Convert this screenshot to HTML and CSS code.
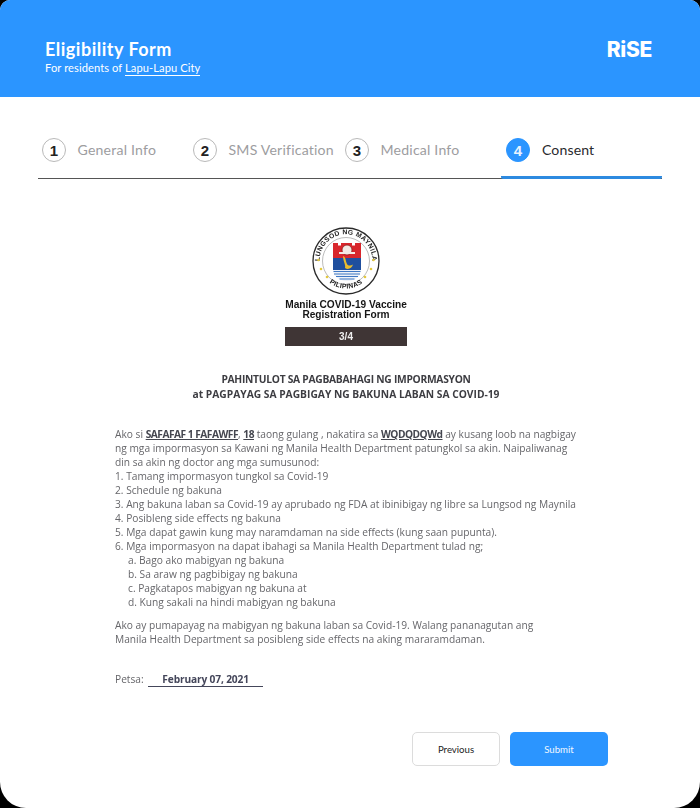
FILE: index.html
```html
<!DOCTYPE html>
<html lang="tl">
<head>
<meta charset="utf-8">
<title>Eligibility Form</title>
<link rel="stylesheet" href="styles.css">
</head>
<body>
<main class="card">
  <header class="hero">
    <div class="hero-text">
      <h1 class="hero-title">Eligibility Form</h1>
      <p class="hero-sub">For residents of <span class="hero-city">Lapu-Lapu City</span></p>
    </div>
    <div class="logo">RiSE</div>
  </header>

  <nav class="tabs">
    <div class="tab"><span class="num">1</span><span class="tab-label">General Info</span></div>
    <div class="tab"><span class="num">2</span><span class="tab-label">SMS Verification</span></div>
    <div class="tab"><span class="num">3</span><span class="tab-label">Medical Info</span></div>
    <div class="tab tab-active"><span class="num">4</span><span class="tab-label">Consent</span></div>
  </nav>

  <section class="doc">
    <div class="doc-head">
      <svg class="seal" width="68" height="68" viewBox="0 0 68 68" aria-hidden="true">
        <circle cx="34" cy="34" r="33" fill="#fff" stroke="#2a2a2a" stroke-width="1.300"/>
        <circle cx="34" cy="34" r="23.500" fill="#fff" stroke="#777" stroke-width=".5"/>
        <defs>
          <path id="arcTop" d="M8.500 40 A26.300 26.300 0 1 1 59.500 40"/>
          <path id="arcBot" d="M11 49 A27.500 27.500 0 0 0 57 49"/>
        </defs>
        <text class="seal-text"><textPath href="#arcTop" startOffset="50%" text-anchor="middle">LUNGSOD NG MAYNILA</textPath></text>
        <text class="seal-text"><textPath href="#arcBot" startOffset="50%" text-anchor="middle">PILIPINAS</textPath></text>
        <path d="M21 16h5v2.500h3V16h11v2.500h3V16h6v15H21z" fill="#d8262c"/>
        <circle cx="35" cy="23" r="5" fill="#f3e9e4" stroke="#8a1a1a" stroke-width=".8"/>
        <rect x="27" y="25" width="16" height="2" fill="#f3e9e4"/>
        <rect x="21" y="31" width="28" height="12" fill="#1f4f9e"/>
        <path d="M31 29c3 1 2.500 5 4 8 1 2 4 2 6 .5-1 4-5 5.500-8 3.500 1-3-2-7-2-12z" fill="#e9bd2f"/>
        <path d="M21 43h28c0 5-5 11-14 11S21 48 21 43z" fill="#eef2f8"/>
        <path d="M21.500 44.500h27M22 47h26M24 49.500h22M27.500 52h15" stroke="#3f78c4" stroke-width="1" fill="none"/>
        <g fill="#e4c93f">
          <circle cx="6.500" cy="33" r="1.300"/><circle cx="61.500" cy="33" r="1.300"/>
          <circle cx="9" cy="42" r="1.300"/><circle cx="59" cy="42" r="1.300"/>
          <circle cx="15" cy="50" r="1.300"/><circle cx="53" cy="50" r="1.300"/>
        </g>
      </svg>
      <p class="doc-name">Manila COVID-19 Vaccine<br>Registration Form</p>
      <div class="doc-step">3/4</div>
    </div>

    <h2 class="doc-title"><span class="doc-title-top">PAHINTULOT SA PAGBABAHAGI NG IMPORMASYON</span><br>at PAGPAYAG SA PAGBIGAY NG BAKUNA LABAN SA COVID-19</h2>

    <div class="doc-body">
      <p class="line">Ako si <b class="fill">SAFAFAF 1 FAFAWFF</b>, <b class="fill">18</b> taong gulang , nakatira sa <b class="fill">WQDQDQWd</b> ay kusang loob na nagbigay</p>
      <p class="line">ng mga impormasyon sa Kawani ng Manila Health Department patungkol sa akin. Naipaliwanag</p>
      <p class="line">din sa akin ng doctor ang mga sumusunod:</p>
      <p class="line">1. Tamang impormasyon tungkol sa Covid-19</p>
      <p class="line">2. Schedule ng bakuna</p>
      <p class="line">3. Ang bakuna laban sa Covid-19 ay aprubado ng FDA at ibinibigay ng libre sa Lungsod ng Maynila</p>
      <p class="line">4. Posibleng side effects ng bakuna</p>
      <p class="line">5. Mga dapat gawin kung may naramdaman na side effects (kung saan pupunta).</p>
      <p class="line">6. Mga impormasyon na dapat ibahagi sa Manila Health Department tulad ng;</p>
      <p class="line sub">a. Bago ako mabigyan ng bakuna</p>
      <p class="line sub">b. Sa araw ng pagbibigay ng bakuna</p>
      <p class="line sub">c. Pagkatapos mabigyan ng bakuna at</p>
      <p class="line sub">d. Kung sakali na hindi mabigyan ng bakuna</p>
      <p class="line gap">Ako ay pumapayag na mabigyan ng bakuna laban sa Covid-19. Walang pananagutan ang</p>
      <p class="line">Manila Health Department sa posibleng side effects na aking mararamdaman.</p>
      <p class="line date">Petsa: <b class="date-val">February 07, 2021</b></p>
    </div>
  </section>

  <footer class="actions">
    <button class="btn btn-ghost" type="button">Previous</button>
    <button class="btn btn-primary" type="button">Submit</button>
  </footer>
</main>
</body>
</html>
```
FILE: styles.css
```css
* { box-sizing: border-box; }
html, body { margin: 0; height: 100%; background: #000; }
p, h1, h2 { margin: 0; font-weight: inherit; font-size: inherit; }

.card {
  width: 700px;
  height: 808px;
  background: #fff;
  border-radius: 10px 10px 26px 26px;
  overflow: hidden;
  font-family: Lato, "Open Sans", sans-serif;
  display: flex;
  flex-direction: column;
}

.hero {
  height: 97px;
  flex: none;
  background: #2b95ff;
  color: #fff;
  display: flex;
  justify-content: space-between;
  align-items: flex-start;
  padding: 39px 48px 0 45px;
}
.hero-title { font-size: 18px; line-height: 21px; font-weight: 700; letter-spacing: .5px; }
.hero-sub { font-size: 11.100px; line-height: 15px; letter-spacing: .1px; }
.hero-city { border-bottom: 1px solid #fff; padding-bottom: 1px; }
.logo { font-family: Inter, sans-serif; font-weight: 800; font-size: 21px; line-height: 21px; letter-spacing: -.3px; }

.tabs {
  margin: 41px 38px 0;
  height: 41px;
  flex: none;
  display: grid;
  grid-template-columns: 151px 152px 160px 161px;
  border-bottom: 1px solid #555;
}
.tab {
  display: flex;
  align-items: flex-start;
  gap: 11.500px;
  padding-left: 4px;
  white-space: nowrap;
}
.num {
  width: 24px;
  height: 24px;
  flex: none;
  border: 1px solid #b9b9b9;
  border-radius: 50%;
  display: flex;
  align-items: center;
  justify-content: center;
  font-family: "Liberation Sans Narrow", "Liberation Sans", sans-serif;
  font-weight: 700;
  font-size: 15px;
  color: #222;
}
.tab-label { font-size: 14.100px; line-height: 24px; color: #9d9d9f; letter-spacing: .2px; }
.tab-active {
  padding-left: 5px;
  gap: 12px;
  height: 41px;
  margin-bottom: -1px;
  border-bottom: 3px solid #2d8ae0;
  border-radius: 0 0 2px 2px;
}
.tab-active .num { background: #2b95ff; border-color: #2b95ff; color: #e8f3ff; }
.tab-active .tab-label { color: #2a2a2e; letter-spacing: .1px; }

.doc {
  flex: none;
  padding: 48px 0 0 115px;
  height: 553px;
  filter: blur(.35px);
}
.doc-head { width: 462px; display: flex; flex-direction: column; align-items: center; }
.seal { display: block; }
.seal-text { font-family: "Liberation Sans", sans-serif; font-weight: 700; font-size: 6.800px; fill: #222; letter-spacing: .3px; }
.doc-name {
  margin-top: 5px;
  font-family: "Liberation Sans", sans-serif;
  font-weight: 700;
  font-size: 10.150px;
  line-height: 10px;
  text-align: center;
  color: #161616;
}
.doc-step {
  margin-top: 7px;
  width: 122px;
  height: 19px;
  background: #3f3535;
  color: #eee;
  font-family: "Liberation Sans", sans-serif;
  font-weight: 700;
  font-size: 10px;
  line-height: 19px;
  text-align: center;
}
.doc-title {
  margin: 26px 0 0 -115px;
  width: 692px;
  text-align: center;
  font-family: "Open Sans", sans-serif;
  font-weight: 700;
  font-size: 10.250px;
  line-height: 15px;
  color: #3d3d42;
}
.doc-title-top { letter-spacing: -.27px; }
.doc-body {
  margin-top: 25px;
  font-size: 10.200px;
  line-height: 14px;
  color: #66666a;
  white-space: nowrap;
  font-family: "Open Sans", sans-serif;
}
.line { height: 14px; }
.sub { padding-left: 13px; }
.gap { margin-top: 9px; }
.date { margin-top: 26px; }
.fill { color: #44464f; text-decoration: underline; font-weight: 700; letter-spacing: -.5px; }
.date-val {
  margin-left: 2px;
  color: #44465a;
  font-weight: 700;
  letter-spacing: -.15px;
  padding: 0 14px;
  border-bottom: 1px solid #44465a;
}

.actions {
  display: flex;
  justify-content: flex-end;
  gap: 10px;
  padding: 0 92px 0 0;
}
.btn {
  height: 34px;
  border-radius: 5px;
  font-family: Lato, sans-serif;
  font-size: 9.600px;
  padding: 0;
}
.btn-ghost { width: 88px; background: #fff; border: 1px solid #dcdcdc; color: #222; }
.btn-primary { width: 98px; background: #2b95ff; border: 0; color: #f2f8ff; }
```
